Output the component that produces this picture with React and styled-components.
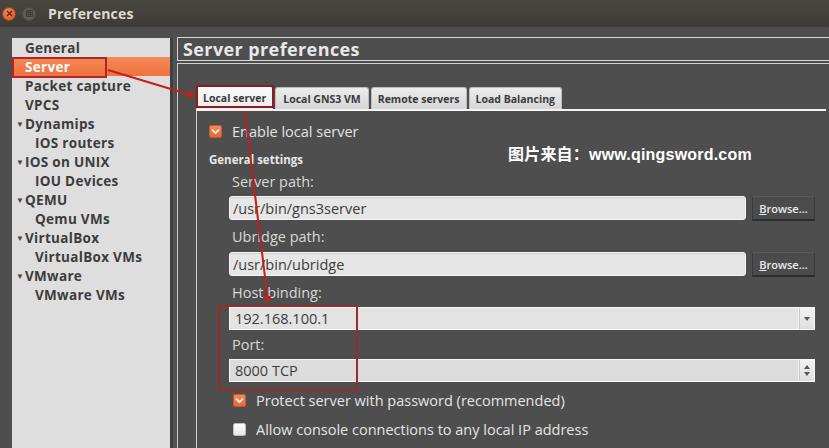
import React from "react";
import styled, { createGlobalStyle } from "styled-components";

const Global = createGlobalStyle`
  html, body { margin: 0; padding: 0; background: #4e4e4e; }
  body { font-family: "Open Sans", "Noto Sans", sans-serif; }
  * { box-sizing: border-box; }
`;

const Window = styled.div`
  position: relative;
  width: 829px;
  height: 448px;
  overflow: hidden;
  display: flex;
  flex-direction: column;
  background: #4e4e4e;
`;

const TitleBar = styled.div`
  height: 27px;
  flex: none;
  display: flex;
  align-items: center;
  padding-left: 2px;
  background: linear-gradient(#48473f, #3c3b37);
`;

const WinButton = styled.div`
  width: 14px;
  height: 14px;
  border-radius: 50%;
  margin-right: 6px;
  display: flex;
  align-items: center;
  justify-content: center;
  background: ${(p) => (p.$close ? "radial-gradient(circle at 40% 35%, #f58a5c, #d9531e)" : "#5e5d58")};
  border: 1px solid ${(p) => (p.$close ? "#a8431a" : "#4a4944")};
`;

const Title = styled.div`
  margin-left: 6px;
  color: #dfdbd2;
  font-size: 14px;
  font-weight: 700;
  letter-spacing: 0.2px;
`;

const Body = styled.div`
  flex: 1;
  display: flex;
  padding: 10px 0 0 12px;
  min-height: 0;
`;

const Sidebar = styled.div`
  width: 161px;
  flex: none;
  margin-top: 1px;
  background: #dedede;
  border-right: 3px solid #3f3f3f;
  box-shadow: 2px 0 0 #555;
`;

const NavItem = styled.div`
  height: 19px;
  display: flex;
  align-items: center;
  padding-left: ${(p) => (p.$child ? 23 : 13)}px;
  font-size: 13.5px;
  font-weight: 700;
  letter-spacing: 0.3px;
  color: ${(p) => (p.$active ? "#ffffff" : "#3c3c3c")};
  background: ${(p) => (p.$active ? "linear-gradient(#f58a55, #ef7240)" : "transparent")};
  position: relative;
  white-space: nowrap;
`;

const Arrow = styled.span`
  position: absolute;
  left: 4px;
  font-size: 8px;
  color: #444;
  top: 4px;
`;

const Main = styled.div`
  flex: 1;
  display: flex;
  flex-direction: column;
  margin-left: 4px;
  min-width: 0;
`;

const Header = styled.div`
  height: 24px;
  border: 1px solid #d6d6d6;
  border-right: none;
  display: flex;
  align-items: center;
  padding-left: 5px;
  color: #e8e8e8;
  font-size: 18px;
  font-weight: 700;
  letter-spacing: 0.4px;
`;

const Frame = styled.div`
  flex: 1;
  margin-top: 2px;
  border-top: 1px solid #d0d0d0;
  border-left: 1px solid #d0d0d0;
  padding: 21px 3px 0 18px;
  display: flex;
  flex-direction: column;
`;

const TabBar = styled.div`
  height: 24px;
  display: flex;
  align-items: flex-end;
  gap: 2px;
`;

const Tab = styled.div`
  height: ${(p) => (p.$active ? 23 : 22)}px;
  padding: 0 ${(p) => p.$pad}px;
  display: flex;
  align-items: center;
  font-size: 10.5px;
  font-weight: 700;
  color: #3a3a3a;
  background: ${(p) => (p.$active ? "linear-gradient(#fafafa, #ececec)" : "linear-gradient(#ececec, #d6d6d6)")};
  border: 1px solid #bdbdbd;
  border-bottom: none;
  border-radius: 3px 3px 0 0;
  white-space: nowrap;
`;

const Pane = styled.div`
  flex: 1;
  border-top: 2px solid #f2f2f2;
  border-left: 1px solid #cfcfcf;
  display: flex;
  flex-direction: column;
  padding: 0 10px 0 11px;
  position: relative;
  color: #e4e4e4;
  font-size: 14.5px;
`;

const CheckRow = styled.div`
  height: 18px;
  margin-top: ${(p) => p.$mt}px;
  margin-left: ${(p) => p.$ml}px;
  display: flex;
  align-items: center;
  gap: 10px;
  white-space: nowrap;
`;

const Box = styled.div`
  width: 13px;
  height: 13px;
  border-radius: 2px;
  display: flex;
  align-items: center;
  justify-content: center;
  background: ${(p) => (p.$on ? "linear-gradient(#f28a5a, #e46a37)" : "linear-gradient(#ffffff, #e6e6e6)")};
  border: 1px solid ${(p) => (p.$on ? "#c75a2d" : "#bdbdbd")};
`;

const Section = styled.div`
  height: 16px;
  margin-top: 11px;
  margin-left: 1px;
  display: flex;
  align-items: center;
  font-size: 11.5px;
  font-weight: 700;
  color: #e8e8e8;
`;

const Label = styled.div`
  height: 18px;
  margin-top: ${(p) => p.$mt}px;
  margin-left: 24px;
  display: flex;
  align-items: center;
  color: #d8d8d8;
  font-size: 14.5px;
`;

const FieldRow = styled.div`
  margin-top: ${(p) => p.$mt}px;
  margin-left: 21px;
  display: flex;
  gap: 6px;
  width: 586px;
`;

const TextInput = styled.div`
  flex: 1;
  height: 24px;
  border-radius: 3px;
  background: #e6e6e6;
  border: 1px solid #f4f4f4;
  box-shadow: inset 0 1px 1px rgba(0,0,0,0.08);
  display: flex;
  align-items: center;
  padding-left: 3px;
  color: #3c3c3c;
  font-size: 14.5px;
`;

const BrowseButton = styled.div`
  width: 63px;
  height: 25px;
  background: #4b4b4b;
  border: 1px solid #3a3a3a;
  border-bottom: 2px solid #2c2c2c;
  border-top-color: #5a5a5a;
  display: flex;
  align-items: center;
  justify-content: center;
  color: #ececec;
  font-size: 11px;
  font-weight: 600;
  u { text-decoration: underline; }
`;

const SelectBox = styled.div`
  flex: 1;
  height: 23px;
  background: #e3e3e3;
  border: 1px solid #f8f8f8;
  display: flex;
  align-items: stretch;
  color: #3c3c3c;
  font-size: 14.5px;
`;

const SelectText = styled.div`
  flex: 1;
  display: flex;
  align-items: center;
  padding-left: 5px;
  background: ${(p) => (p.$spin ? "#dcdcdc" : "transparent")};
  border-right: 1px solid #f4f4f4;
`;

const SideButton = styled.div`
  width: 15px;
  display: flex;
  flex-direction: column;
  align-items: center;
  justify-content: center;
  gap: 3px;
  background: linear-gradient(#f2f2f2, #dedede);
  border-left: 1px solid #c8c8c8;
`;

const Watermark = styled.div`
  position: absolute;
  left: 311px;
  top: 30px;
  color: #ffffff;
  font-family: Arial, "Liberation Sans", "Noto Sans CJK SC", sans-serif;
  font-weight: 700;
  font-size: 16px;
  white-space: nowrap;
  letter-spacing: 0.2px;
`;

const RedBox = styled.div`
  position: absolute;
  border: 2px solid ${(p) => p.$c || "#a52424"};
  pointer-events: none;
`;

const Overlay = styled.svg`
  position: absolute;
  left: 0;
  top: 0;
  pointer-events: none;
`;

const Check = () => (
  <svg width="9" height="8" viewBox="0 0 9 8">
    <path d="M1 2.5 L4.5 6 L8 2.5" fill="none" stroke="#fff" strokeWidth="1.6" />
  </svg>
);

const Tri = ({ up }) => (
  <svg width="6" height="4" viewBox="0 0 6 4">
    <path d={up ? "M0 4 L3 0 L6 4 Z" : "M0 0 L6 0 L3 4 Z"} fill="#555" />
  </svg>
);

const nav = [
  ["General"],
  ["Server", false, false, true],
  ["Packet capture"],
  ["VPCS"],
  ["Dynamips", false, true],
  ["IOS routers", true],
  ["IOS on UNIX", false, true],
  ["IOU Devices", true],
  ["QEMU", false, true],
  ["Qemu VMs", true],
  ["VirtualBox", false, true],
  ["VirtualBox VMs", true],
  ["VMware", false, true],
  ["VMware VMs", true],
];

export default function App() {
  return (
    <Window>
      <Global />
      <TitleBar>
        <WinButton $close>
          <svg width="7" height="7" viewBox="0 0 7 7">
            <path d="M1 1 L6 6 M6 1 L1 6" stroke="#5a2410" strokeWidth="1.3" />
          </svg>
        </WinButton>
        <WinButton>
          <svg width="7" height="7" viewBox="0 0 7 7">
            <path d="M0.5 0.5 H6.5 V6.5 H0.5 Z M2.5 0.5 V6.5 M4.5 0.5 V6.5 M0.5 2.5 H6.5 M0.5 4.5 H6.5" fill="none" stroke="#3a3935" strokeWidth="0.8" />
          </svg>
        </WinButton>
        <Title>Preferences</Title>
      </TitleBar>
      <Body>
        <Sidebar>
          {nav.map(([t, child, arrow, active]) => (
            <NavItem key={t} $child={child} $active={active}>
              {arrow && <Arrow>▼</Arrow>}
              {t}
            </NavItem>
          ))}
        </Sidebar>
        <Main>
          <Header>Server preferences</Header>
          <Frame>
            <TabBar>
              <Tab $active $pad={6}>Local server</Tab>
              <Tab $pad={7}>Local GNS3 VM</Tab>
              <Tab $pad={6}>Remote servers</Tab>
              <Tab $pad={6}>Load Balancing</Tab>
            </TabBar>
            <Pane>
              <CheckRow $mt={11} $ml={1}>
                <Box $on><Check /></Box>
                Enable local server
              </CheckRow>
              <Section>General settings</Section>
              <Label $mt={5}>Server path:</Label>
              <FieldRow $mt={6}>
                <TextInput>/usr/bin/gns3server</TextInput>
                <BrowseButton><span><u>B</u>rowse...</span></BrowseButton>
              </FieldRow>
              <Label $mt={6}>Ubridge path:</Label>
              <FieldRow $mt={7}>
                <TextInput>/usr/bin/ubridge</TextInput>
                <BrowseButton><span><u>B</u>rowse...</span></BrowseButton>
              </FieldRow>
              <Label $mt={6}>Host binding:</Label>
              <FieldRow $mt={6}>
                <SelectBox>
                  <SelectText>192.168.100.1</SelectText>
                  <SideButton><Tri /></SideButton>
                </SelectBox>
              </FieldRow>
              <Label $mt={5}>Port:</Label>
              <FieldRow $mt={6}>
                <SelectBox>
                  <SelectText $spin>8000 TCP</SelectText>
                  <SideButton><Tri up /><Tri /></SideButton>
                </SelectBox>
              </FieldRow>
              <CheckRow $mt={9} $ml={25}>
                <Box $on><Check /></Box>
                Protect server with password (recommended)
              </CheckRow>
              <CheckRow $mt={11} $ml={25}>
                <Box />
                Allow console connections to any local IP address
              </CheckRow>
              <Watermark>图片来自：www.qingsword.com</Watermark>
            </Pane>
          </Frame>
        </Main>
      </Body>

      <RedBox style={{ left: 12, top: 57, width: 95, height: 21 }} $c="#b0272a" />
      <RedBox style={{ left: 196, top: 85, width: 78, height: 23 }} $c="#8e1b1f" />
      <RedBox style={{ left: 218, top: 305, width: 140, height: 86 }} $c="#9a2b2b" />
      <Overlay width="829" height="448" viewBox="0 0 829 448">
        <defs>
          <marker id="ah" markerWidth="8" markerHeight="8" refX="6" refY="4" orient="auto" markerUnits="userSpaceOnUse">
            <path d="M0 0 L8 4 L0 8 Z" fill="#c81e1e" />
          </marker>
        </defs>
        <line x1="108" y1="70" x2="194" y2="96" stroke="#c01f1f" strokeWidth="2" markerEnd="url(#ah)" />
        <line x1="245" y1="112" x2="268" y2="302" stroke="#c01f1f" strokeWidth="2" markerEnd="url(#ah)" />
      </Overlay>
    </Window>
  );
}
